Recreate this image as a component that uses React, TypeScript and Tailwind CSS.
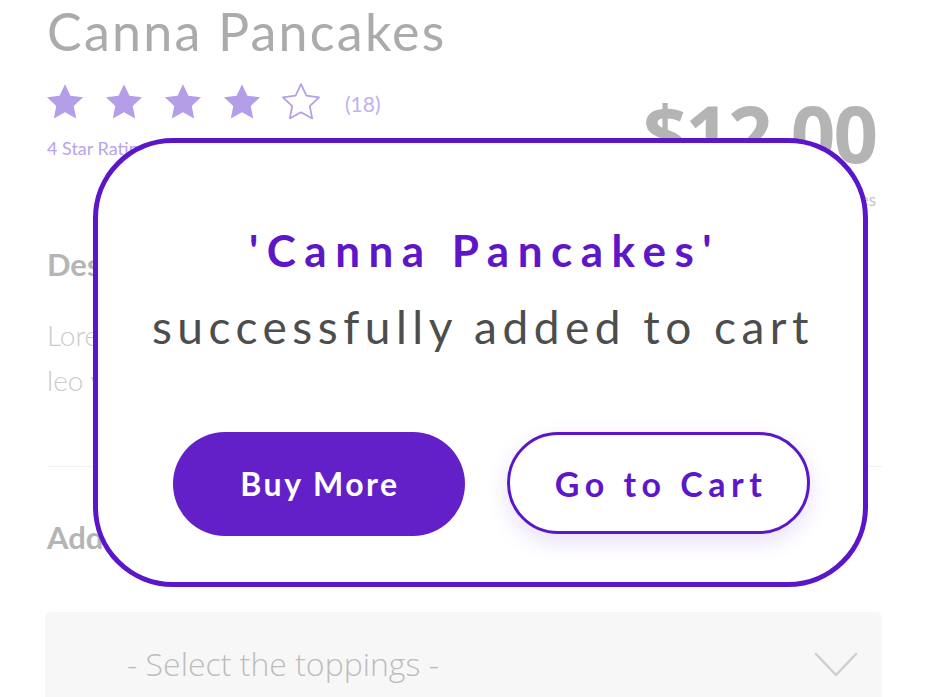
import React from 'react';

const Star: React.FC<{ filled?: boolean }> = ({ filled }) => (
    <svg viewBox="0 0 24 24" className="h-[42px] w-[42px]" fill={filled ? '#b49ee8' : 'none'} stroke="#b49ee8" strokeWidth={filled ? 0 : 1} strokeLinejoin="round">
        <path d="M12 1.8l3.1 6.6 7.2.9-5.3 5 1.4 7.1L12 17.9l-6.4 3.5 1.4-7.1-5.3-5 7.2-.9z" />
    </svg>
);

const App: React.FC = () => {
    return (
        <div className="relative h-[697px] w-[929px] overflow-hidden bg-white" style={{ fontFamily: 'Lato, "Open Sans", sans-serif' }}>
            {/* product page behind the popup */}
            <div className="px-[47px] pt-[5px]">
                <h1 className="text-[52px] leading-none tracking-[2.2px] text-[#ababab]">Canna Pancakes</h1>

                <div className="mt-[24px] flex items-start justify-between">
                    <div>
                        <div className="ml-[-3px] flex items-center gap-[17px]">
                            <Star filled />
                            <Star filled />
                            <Star filled />
                            <Star filled />
                            <Star />
                            <span className="ml-[6px] mt-[4px] text-[21px] text-[#c3b0f0]">(18)</span>
                        </div>
                        <p className="mt-[12px] text-[18px] text-[#b9a3ec]">4 Star Rating</p>
                    </div>
                    <div className="flex flex-col items-end">
                        <span className="mt-[13px] mr-[6px] text-[78px] font-bold leading-none tracking-[-2px] text-[#b4b4b4]" style={{ fontFamily: '"Open Sans", sans-serif' }}>$12.00</span>
                        <span className="mt-[15px] mr-[6px] text-[17px] text-[#c4c4c4]">Prices incl. all taxes</span>
                    </div>
                </div>

                <h2 className="mt-[28px] text-[31px] font-bold text-[#b5b5b5]">Description</h2>
                <p className="mt-[26px] text-[28px] font-light leading-[45px] text-[#cbcbcb]">
                    Lorem ipsum dolor sit amet, consectetur adipiscing elit
                    <br />
                    leo vel fringilla est ullamcorper eget nulla
                </p>

                <div className="mt-[63px] border-t border-[#f1f1f1]" />

                <h2 className="mt-[47px] text-[31px] font-bold text-[#b5b5b5]">Add Toppings</h2>

                <div className="mt-[51px] ml-[-2px] flex h-[110px] items-start justify-between rounded-t-[6px] bg-[#f7f7f7] pl-[82px] pr-[24px] pt-[36px]">
                    <span className="text-[32px] font-light leading-none text-[#bdbdbd]" style={{ fontFamily: '"Open Sans", sans-serif' }}>- Select the toppings -</span>
                    <svg viewBox="0 0 44 26" className="mt-[4px] h-[26px] w-[44px]" fill="none" stroke="#cfcfcf" strokeWidth="2.5" strokeLinecap="round" strokeLinejoin="round">
                        <path d="M2 2l20 21L42 2" />
                    </svg>
                </div>
            </div>

            {/* added-to-cart popup */}
            <div className="absolute left-[93px] top-[138px] flex h-[449px] w-[775px] flex-col items-center rounded-[80px] border-[5px] border-[#5a16c8] bg-white">
                <p className="mt-[85px] pl-[8px] text-[44px] font-bold leading-none tracking-[8.5px] text-[#5e17c8]">'Canna Pancakes'</p>
                <p className="mt-[32px] pl-[5px] text-[46px] leading-none tracking-[5.5px] text-[#4d4d4d]">successfully added to cart</p>
                <div className="mt-[82px] flex w-full gap-[42px] pl-[75px]">
                    <button className="h-[104px] w-[292px] rounded-full bg-[#6420c8] pl-[2px] text-[32px] font-bold tracking-[2.5px] text-white">
                        Buy More
                    </button>
                    <button className="h-[102px] w-[303px] rounded-full border-[3px] border-[#5a16c8] bg-white pl-[5px] text-[34px] font-bold tracking-[5.5px] text-[#5e17c8] shadow-[0_8px_22px_rgba(98,32,200,0.14)]">
                        Go to Cart
                    </button>
                </div>
            </div>
        </div>
    );
};

export default App;
